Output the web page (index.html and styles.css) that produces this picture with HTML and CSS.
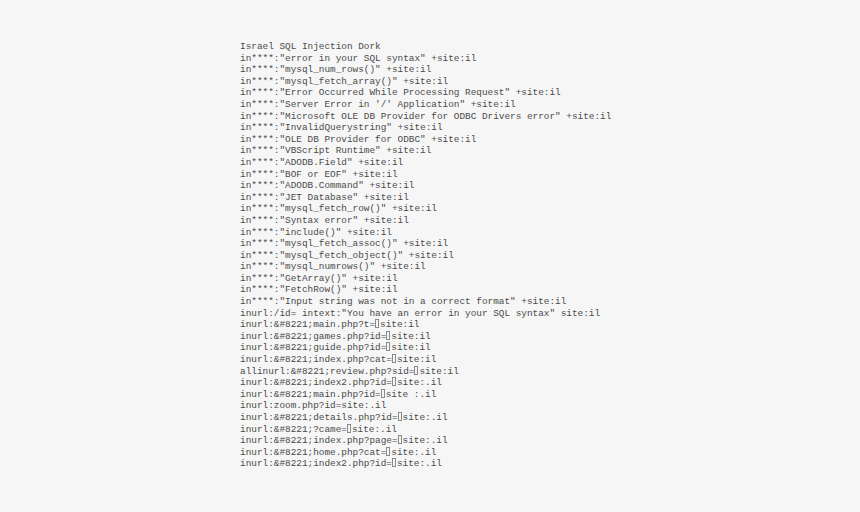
FILE: index.html
```html
<!DOCTYPE html>
<html>
<head>
<meta charset="utf-8">
<link rel="stylesheet" href="styles.css">
</head>
<body>
<div class="page">
<div class="dork">
<div class="line">Israel SQL Injection Dork</div>
<div class="line">in****:"error in your SQL syntax" +site:il</div>
<div class="line">in****:"mysql_num_rows()" +site:il</div>
<div class="line">in****:"mysql_fetch_array()" +site:il</div>
<div class="line">in****:"Error Occurred While Processing Request" +site:il</div>
<div class="line">in****:"Server Error in '/' Application" +site:il</div>
<div class="line">in****:"Microsoft OLE DB Provider for ODBC Drivers error" +site:il</div>
<div class="line">in****:"InvalidQuerystring" +site:il</div>
<div class="line">in****:"OLE DB Provider for ODBC" +site:il</div>
<div class="line">in****:"VBScript Runtime" +site:il</div>
<div class="line">in****:"ADODB.Field" +site:il</div>
<div class="line">in****:"BOF or EOF" +site:il</div>
<div class="line">in****:"ADODB.Command" +site:il</div>
<div class="line">in****:"JET Database" +site:il</div>
<div class="line">in****:"mysql_fetch_row()" +site:il</div>
<div class="line">in****:"Syntax error" +site:il</div>
<div class="line">in****:"include()" +site:il</div>
<div class="line">in****:"mysql_fetch_assoc()" +site:il</div>
<div class="line">in****:"mysql_fetch_object()" +site:il</div>
<div class="line">in****:"mysql_numrows()" +site:il</div>
<div class="line">in****:"GetArray()" +site:il</div>
<div class="line">in****:"FetchRow()" +site:il</div>
<div class="line">in****:"Input string was not in a correct format" +site:il</div>
<div class="line">inurl:/id= intext:"You have an error in your SQL syntax" site:il</div>
<div class="line">inurl:&amp;#8221;main.php?t=<span class="box"></span>site:il</div>
<div class="line">inurl:&amp;#8221;games.php?id=<span class="box"></span>site:il</div>
<div class="line">inurl:&amp;#8221;guide.php?id=<span class="box"></span>site:il</div>
<div class="line">inurl:&amp;#8221;index.php?cat=<span class="box"></span>site:il</div>
<div class="line">allinurl:&amp;#8221;review.php?sid=<span class="box"></span>site:il</div>
<div class="line">inurl:&amp;#8221;index2.php?id=<span class="box"></span>site:.il</div>
<div class="line">inurl:&amp;#8221;main.php?id=<span class="box"></span>site :.il</div>
<div class="line">inurl:zoom.php?id=site:.il</div>
<div class="line">inurl:&amp;#8221;details.php?id=<span class="box"></span>site:.il</div>
<div class="line">inurl:&amp;#8221;?came=<span class="box"></span>site:.il</div>
<div class="line">inurl:&amp;#8221;index.php?page=<span class="box"></span>site:.il</div>
<div class="line">inurl:&amp;#8221;home.php?cat=<span class="box"></span>site:.il</div>
<div class="line">inurl:&amp;#8221;index2.php?id=<span class="box"></span>site:.il</div>
</div>
</div>
</body>
</html>
```
FILE: styles.css
```css
html, body {
  margin: 0;
  padding: 0;
  background: #f6f6f6;
}
.page {
  width: 860px;
  height: 512px;
  box-sizing: border-box;
  padding: 41px 0 0 240px;
  overflow: hidden;
}
.dork {
  font-family: "Liberation Mono", "Courier New", monospace;
  font-size: 9.4px;
  line-height: 11.6px;
  color: #4a4a4a;
  letter-spacing: 0;
}
.line {
  white-space: pre;
}
.box {
  display: inline-block;
  width: 2px;
  height: 7px;
  border: 1px solid #8a8a8a;
  margin: 0 1px 0 0;
  vertical-align: -1px;
}
```
